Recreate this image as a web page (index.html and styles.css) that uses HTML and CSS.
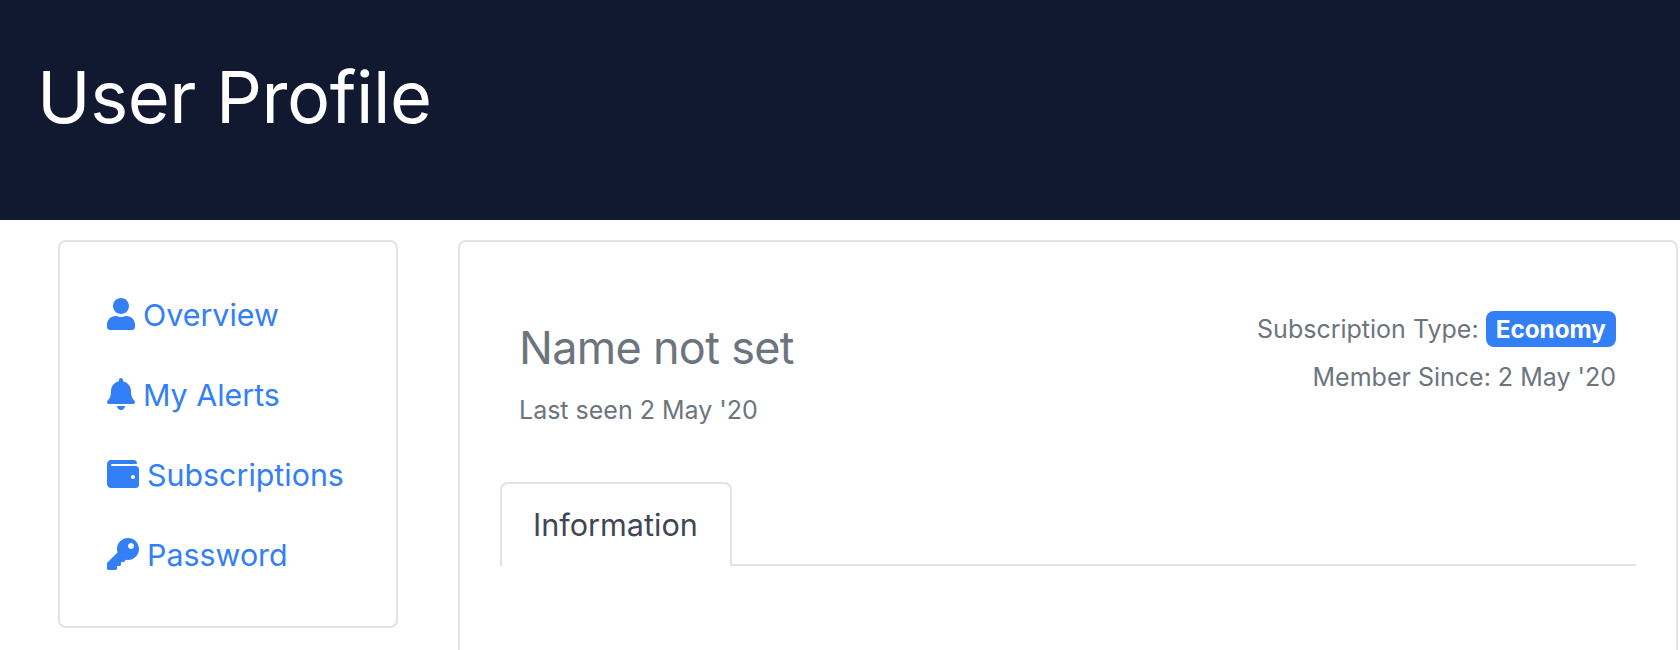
FILE: index.html
```html
<!DOCTYPE html>
<html lang="en">
<head>
<meta charset="utf-8">
<title>User Profile</title>
<link rel="stylesheet" href="styles.css">
</head>
<body>
<header class="page-header"><h1 class="page-title">User Profile</h1></header>
<div class="layout">
  <aside class="card side-card">
    <nav class="side-nav">
      <a class="side-link" href="#"><svg class="icon icon-narrow" viewBox="0 0 448 512"><path d="M224 256c70.7 0 128-57.3 128-128S294.7 0 224 0 96 57.3 96 128s57.3 128 128 128zm89.6 32h-16.7c-22.2 10.2-46.9 16-72.9 16s-50.6-5.8-72.9-16h-16.7C60.2 288 0 348.2 0 422.4V464c0 26.5 21.5 48 48 48h352c26.5 0 48-21.5 48-48v-41.6c0-74.2-60.2-134.4-134.4-134.4z"/></svg><span class="side-label">Overview</span></a>
      <a class="side-link" href="#"><svg class="icon icon-narrow" viewBox="0 0 448 512"><path d="M224 512c35.32 0 63.97-28.65 63.97-64H160.03c0 35.35 28.65 64 63.97 64zm215.39-149.71c-19.32-20.76-55.47-51.99-55.47-154.29 0-77.7-54.48-139.9-127.94-155.16V32c0-17.67-14.32-32-31.98-32s-31.98 14.33-31.98 32v20.84C118.56 68.1 64.08 130.3 64.08 208c0 102.3-36.15 133.53-55.47 154.29-6 6.45-8.66 14.16-8.61 21.71.11 16.4 12.98 32 32.1 32h383.8c19.12 0 32-15.6 32.1-32 .05-7.55-2.61-15.27-8.61-21.71z"/></svg><span class="side-label">My Alerts</span></a>
      <a class="side-link" href="#"><svg class="icon icon-wide" viewBox="0 0 512 512"><path d="M461.2 128H80c-8.84 0-16-7.16-16-16s7.16-16 16-16h384c8.84 0 16-7.16 16-16 0-26.51-21.49-48-48-48H64C28.65 32 0 60.65 0 96v320c0 35.35 28.65 64 64 64h397.2c28.02 0 50.8-21.53 50.8-48V176c0-26.47-22.78-48-50.8-48zM416 336c-17.67 0-32-14.33-32-32s14.33-32 32-32 32 14.33 32 32-14.33 32-32 32z"/></svg><span class="side-label">Subscriptions</span></a>
      <a class="side-link" href="#"><svg class="icon icon-wide" viewBox="0 0 512 512"><path d="M512 176.001C512 273.203 433.202 352 336 352c-11.22 0-22.19-1.062-32.827-3.069l-24.012 27.014A23.999 23.999 0 0 1 261.223 384H224v40c0 13.255-10.745 24-24 24h-40v40c0 13.255-10.745 24-24 24H24c-13.255 0-24-10.745-24-24v-78.059c0-6.365 2.529-12.47 7.029-16.971l161.802-161.802C163.586 213.918 160 195.375 160 176 160 78.798 238.797.001 335.999 0 433.488-.001 512 78.511 512 176.001zM336 128c0 26.51 21.49 48 48 48s48-21.49 48-48-21.49-48-48-48-48 21.49-48 48z"/></svg><span class="side-label">Password</span></a>
    </nav>
  </aside>
  <main class="card main-card">
    <div class="profile-head">
      <div class="profile-id">
        <h2 class="profile-name">Name not set</h2>
        <p class="profile-seen">Last seen 2 May '20</p>
      </div>
      <div class="profile-meta">
        <p class="meta-line">Subscription Type: <span class="badge">Economy</span></p>
        <p class="meta-line">Member Since: 2 May '20</p>
      </div>
    </div>
    <div class="tabs"><a class="tab" href="#">Information</a></div>
  </main>
</div>
</body>
</html>
```
FILE: styles.css
```css
* { box-sizing: border-box; }
html, body { margin: 0; height: 650px; overflow: hidden; background: #fff; }
body { font-family: Inter, "Liberation Sans", sans-serif; }
.page-header { height: 220px; background: #111930; padding: 49px 37px 0; }
.page-title { margin: 0; font-size: 72px; line-height: 96px; font-weight: 400; letter-spacing: -0.4px; color: #fff; }
.layout { display: flex; align-items: flex-start; gap: 60px; padding: 20px 2px 0 58px; }
.card { background: #fff; border: 2px solid #e2e2e2; border-radius: 8px; }
.side-card { flex: 0 0 340px; height: 388px; padding: 32px 47px; }
.side-nav { display: flex; flex-direction: column; }
.side-link { display: flex; align-items: center; height: 80px; font-size: 30.4px; color: #3380f6; text-decoration: none; }
.side-label { padding-top: 2px; }
.icon { height: 32px; fill: currentColor; flex: none; margin-right: 8px; }
.icon-narrow { width: 28px; }
.icon-wide { width: 32px; }
.main-card { flex: 1; height: 600px; padding: 0 40px; }
.profile-head { display: flex; justify-content: space-between; padding: 69px 20px 0 19px; height: 240px; }
.profile-id { padding-top: 7px; }
.profile-name { margin: 0; font-size: 45px; line-height: 60px; font-weight: 400; letter-spacing: -0.7px; color: #6c757d; }
.profile-seen { margin: 14px 0 0; font-size: 25px; line-height: 36px; color: #6c757d; }
.profile-meta { text-align: right; }
.meta-line { margin: 0 0 12px; font-size: 25px; line-height: 36px; color: #6c757d; }
.badge { display: inline-block; padding: 0 10px; height: 36px; line-height: 36px; font-size: 24.3px; font-weight: 700; color: #fff; background: #3380f6; border-radius: 8px; }
.tabs { display: flex; border-bottom: 2px solid #e2e2e2; height: 84px; }
.tab { width: 232px; height: 84px; padding: 21px 31px 0; font-size: 30.6px; line-height: 40px; color: #3f4654; text-decoration: none; background: #fff; border: 2px solid #e2e2e2; border-bottom: 0; border-radius: 8px 8px 0 0; }
```
